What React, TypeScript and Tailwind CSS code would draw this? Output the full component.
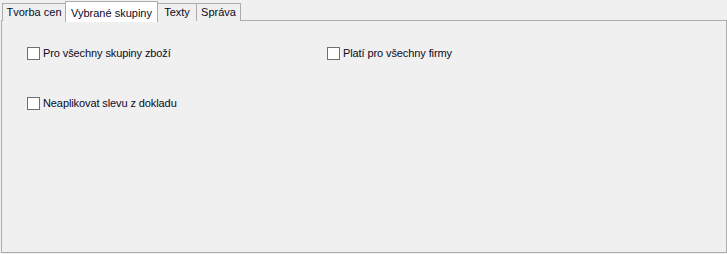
import React from "react";

function Check({ label }: { label: string }) {
  return (
    <label className="flex items-center gap-[3px] h-[13px]">
      <span className="w-[13px] h-[13px] border border-[#707070] bg-white box-border shrink-0" />
      <span className="leading-[13px] tracking-[-0.1px]">{label}</span>
    </label>
  );
}

export default function App() {
  return (
    <div
      className="w-[727px] h-[254px] bg-[#f0f0f0] text-[11px] text-[#0a0a1e] overflow-hidden"
      style={{ fontFamily: "'Liberation Sans', Arial, sans-serif" }}
    >
      <div className="flex items-end h-[21px] pl-[2px] relative z-10">
        <div className="h-[18px] w-[64px] border border-b-0 border-[#adadad] bg-[#f0f0f0] flex items-center justify-center">
          Tvorba cen
        </div>
        <div className="h-[21px] w-[93px] -mb-[1px] border border-b-0 border-[#adadad] bg-white flex items-start justify-center pt-[3px] -ml-[1px]">
          Vybrané skupiny
        </div>
        <div className="h-[18px] w-[40px] border border-b-0 border-[#adadad] bg-[#f0f0f0] flex items-center justify-center -ml-[1px]">
          Texty
        </div>
        <div className="h-[18px] w-[45px] border border-b-0 border-[#adadad] bg-[#f0f0f0] flex items-center justify-center -ml-[1px]">
          Správa
        </div>
      </div>
      <div className="ml-[1px] mt-[-1px] h-[233px] border border-[#adadad] bg-[#f0f0f0] pl-[25px] pt-[26px]">
        <div className="grid grid-cols-[300px_1fr] gap-y-[37px]">
          <Check label="Pro všechny skupiny zboží" />
          <Check label="Platí pro všechny firmy" />
          <Check label="Neaplikovat slevu z dokladu" />
        </div>
      </div>
    </div>
  );
}
